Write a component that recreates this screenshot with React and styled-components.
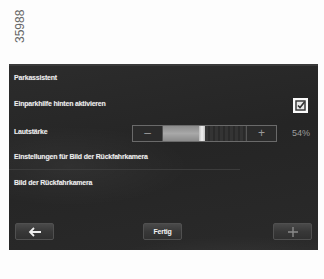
import React from 'react';
import styled, { createGlobalStyle } from 'styled-components';

const GlobalStyle = createGlobalStyle`
body {
  margin: 0;
  background: #fdfdfd;
  font-family: "Liberation Sans", Arial, sans-serif;
}

* {
  box-sizing: border-box;
}
`

const Page = styled.div`
width: 324px;
height: 279px;
display: flex;
flex-direction: column;
`

const Header = styled.div`
height: 64px;
position: relative;
`

const FigureNo = styled.div`
position: absolute;
left: 13px;
top: 43px;
transform: rotate(-90deg);
transform-origin: left top;
font-size: 12px;
color: #666;
`

const Panel = styled.div`
margin: 0 6px 0 9px;
height: 186px;
display: flex;
flex-direction: column;
background:
  radial-gradient(ellipse 120px 40px at 60px 100px, rgba(255,255,255,0.05), transparent),
  radial-gradient(ellipse 140px 30px at 230px 200px, rgba(255,255,255,0.06), transparent),
  linear-gradient(170deg, #2c2c2c 0%, #252525 45%, #2a2a2a 100%);
border-top: 2px solid #3a3a3a;
color: #ececec;
`

const Row = styled.div`
height: ${p => p.h}px;
display: flex;
align-items: center;
padding: ${p => p.pt || 0}px 8px 0 5px;
border-bottom: ${p => p.line ? '1px solid #3c3c3c' : 'none'};
margin-right: ${p => p.line ? '78px' : '0'};
`

const Label = styled.span`
font-size: 7px;
font-weight: bold;
letter-spacing: -0.2px;
flex: 1;
text-shadow: 0 0 1px rgba(255,255,255,0.3);
`

const Check = styled.div`
width: 15px;
height: 15px;
margin: 4px 2px 0 0;
background: #e8e8e8;
border: 2px solid #fafafa;
display: flex;
align-items: center;
justify-content: center;
`

const Slider = styled.div`
width: 145px;
height: 17px;
margin-top: 4px;
display: flex;
border: 1px solid #6a6a6a;
`

const Step = styled.div`
width: 30px;
display: flex;
align-items: center;
justify-content: center;
color: #9a9a9a;
font-size: 12px;
background: #2b2b2b;
border-right: ${p => p.left ? '1px solid #555' : 'none'};
border-left: ${p => p.left ? 'none' : '1px solid #555'};
`

const Track = styled.div`
flex: 1;
display: flex;
`

const Fill = styled.div`
background: linear-gradient(#8c8c8c, #a8a8a8 50%, #8a8a8a);
`

const Knob = styled.div`
width: 6px;
background: linear-gradient(90deg, #bdbdbd, #f0f0f0, #c4c4c4);
`

const Rest = styled.div`
flex: 1;
background: repeating-linear-gradient(90deg, #343434 0 3px, #2a2a2a 3px 5px);
`

const Percent = styled.span`
width: 24px;
margin-top: 4px;
margin-left: 9px;
font-size: 9px;
color: #9c9c9c;
text-align: right;
`

const Spacer = styled.div`
flex: 1;
`

const Footer = styled.div`
height: 30px;
display: flex;
align-items: flex-start;
justify-content: space-between;
padding: 3px 6px 0 6px;
`

const Button = styled.div`
width: 39px;
height: 17px;
margin-left: ${p => p.shift || 0}px;
display: flex;
align-items: center;
justify-content: center;
background: linear-gradient(#4a4a4a, #383838 50%, #303030);
border: 1px solid #505050;
border-radius: 2px;
color: #f4f4f4;
font-size: 7px;
font-weight: bold;
letter-spacing: -0.2px;
`

export default function App() {
  const volume = 54;
  return (
    <Page>
      <GlobalStyle />
      <Header>
        <FigureNo>35988</FigureNo>
      </Header>
      <Panel>
        <Row h={22}><Label>Parkassistent</Label></Row>
        <Row h={28} pt={2}>
          <Label>Einparkhilfe hinten aktivieren</Label>
          <Check>
            <svg width="11" height="11" viewBox="0 0 11 11">
              <rect x="1" y="1" width="9" height="9" fill="none" stroke="#333" strokeWidth="1.4" />
              <path d="M3 5.5 L5 7.5 L9.5 2" fill="none" stroke="#333" strokeWidth="1.6" />
            </svg>
          </Check>
        </Row>
        <Row h={28} pt={2}>
          <Label>Lautstärke</Label>
          <Slider>
            <Step left>–</Step>
            <Track>
              <Fill style={{ width: `${volume * 0.8}%` }} />
              <Knob />
              <Rest />
            </Track>
            <Step>+</Step>
          </Slider>
          <Percent>{volume}%</Percent>
        </Row>
        <Row h={26} line><Label>Einstellungen für Bild der Rückfahrkamera</Label></Row>
        <Row h={24}><Label>Bild der Rückfahrkamera</Label></Row>
        <Spacer />
        <Footer>
          <Button>
            <svg width="14" height="10" viewBox="0 0 14 10">
              <path d="M13 5 H2 M6 1 L2 5 L6 9" fill="none" stroke="#eee" strokeWidth="1.8" />
            </svg>
          </Button>
          <Button shift={-2}>Fertig</Button>
          <Button>
            <svg width="12" height="12" viewBox="0 0 12 12">
              <path d="M6 1 V11 M1 6 H11" fill="none" stroke="#8a8a8a" strokeWidth="1.4" />
            </svg>
          </Button>
        </Footer>
      </Panel>
    </Page>
  );
}
